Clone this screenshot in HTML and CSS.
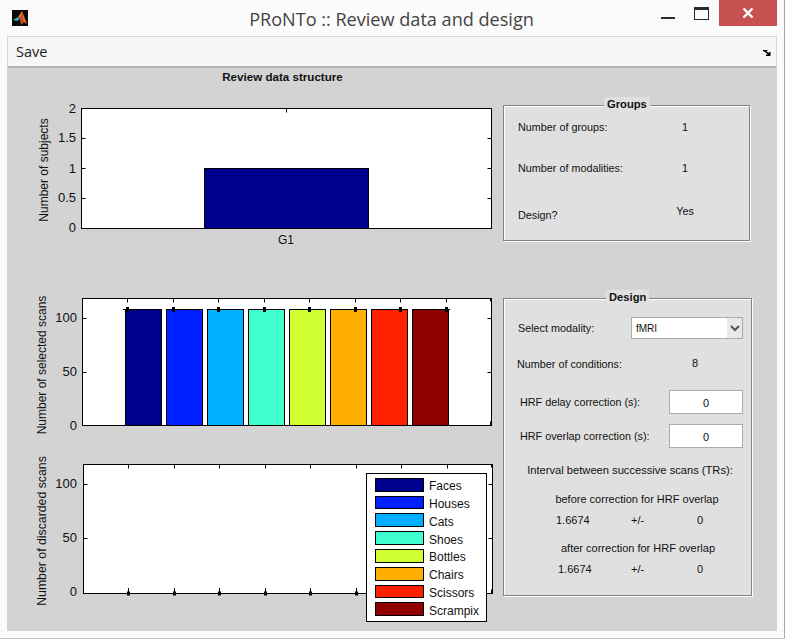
FILE: index.html
```html
<!DOCTYPE html>
<html lang="en">
<head>
  <meta charset="UTF-8">
  <meta name="viewport" content="width=device-width, initial-scale=1.0">
  <title>PRoNTo :: Review data and design</title>
  <link rel="stylesheet" href="styles.css">
</head>
<body>
  <div class="window">
    <div class="titlebar">
      <svg class="app-icon" width="16" height="16" viewBox="0 0 16 16">
        <rect width="16" height="16" fill="#0a0a0a"/>
        <path d="M1 10 L6 7 L8 9 L5 11 Z" fill="#3fa7c9"/>
        <path d="M6 7 L10 1 L15 14 L12 12 L9 9 Z" fill="#e8762a"/>
        <path d="M10 1 L12 12 L9 15 L8 9 Z" fill="#c9501c"/>
      </svg>
      <div class="title">PRoNTo :: Review data and design</div>
      <div class="window-buttons">
        <div class="btn-min"></div>
        <div class="btn-max"></div>
        <div class="btn-close">
          <svg width="12" height="10" viewBox="0 0 12 10">
            <path d="M1.5 0.5 L10.5 9.5 M10.5 0.5 L1.5 9.5" stroke="#fff" stroke-width="2.4" fill="none"/>
          </svg>
        </div>
      </div>
    </div>

    <div class="menubar">
      <span class="menu-item">Save</span>
      <svg class="dock-arrow" width="8" height="6" viewBox="0 0 8 6">
        <path d="M0 0 H4 L5 1 H3 L6 3 V2 H7.5 V6 H3 V4.5 H5 L2 2 L0 1 Z" fill="#000"/>
      </svg>
    </div>

    <div class="figure">
      <div class="plots">
        <div class="plots-title">Review data structure</div>

        <svg class="chart chart-subjects" width="496" height="164" viewBox="7 86 496 164">
          <rect class="axes" x="81.5" y="108.5" width="410" height="120"/>
          <rect x="204.5" y="168.5" width="164" height="60" fill="#00008f" stroke="#000"/>
          <path class="tick" d="M286.5 108.5 v4 M81.5 138.5 h4 M81.5 168.5 h4 M81.5 198.5 h4 M491.5 138.5 h-4 M491.5 168.5 h-4 M491.5 198.5 h-4"/>
          <text class="tick-label" x="76" y="113">2</text>
          <text class="tick-label" x="76" y="142">1.5</text>
          <text class="tick-label" x="76" y="173">1</text>
          <text class="tick-label" x="76" y="202">0.5</text>
          <text class="tick-label" x="76" y="232">0</text>
          <text class="x-label" x="286" y="244">G1</text>
          <text class="y-label" transform="translate(48 170) rotate(-90)">Number of subjects</text>
        </svg>

        <svg class="chart chart-selected" width="496" height="158" viewBox="7 288 496 158">
          <rect class="axes" x="82.5" y="298.5" width="409" height="127"/>
          <rect x="125.5" y="309.5" width="36" height="116" fill="#00008f" stroke="#000"/>
          <rect x="166.5" y="309.5" width="36" height="116" fill="#0020ff" stroke="#000"/>
          <rect x="207.5" y="309.5" width="36" height="116" fill="#00afff" stroke="#000"/>
          <rect x="248.5" y="309.5" width="36" height="116" fill="#40ffcf" stroke="#000"/>
          <rect x="289.5" y="309.5" width="36" height="116" fill="#cfff30" stroke="#000"/>
          <rect x="330.5" y="309.5" width="36" height="116" fill="#ffaf00" stroke="#000"/>
          <rect x="371.5" y="309.5" width="36" height="116" fill="#ff2000" stroke="#000"/>
          <rect x="412.5" y="309.5" width="36" height="116" fill="#8f0000" stroke="#000"/>
          <path class="tick" d="M127.5 298.5 v4 M173.5 298.5 v4 M218.5 298.5 v4 M264.5 298.5 v4 M309.5 298.5 v4 M355.5 298.5 v4 M400.5 298.5 v4 M446.5 298.5 v4
            M82.5 318.5 h4 M82.5 372.5 h4 M491.5 318.5 h-4 M491.5 372.5 h-4 M490.5 298.5 v3 M490.5 425.5 v-4"/>
          <path class="tick" d="M123 309.5 h8 M442 309.5 h8"/>
          <path class="dot" d="M127.5 307 v5 M173.5 307 v5 M218.5 307 v5 M264.5 307 v5 M309.5 307 v5 M355.5 307 v5 M400.5 307 v5 M446.5 307 v5"/>
          <text class="tick-label" x="77" y="322">100</text>
          <text class="tick-label" x="77" y="376">50</text>
          <text class="tick-label" x="77" y="430">0</text>
          <text class="y-label" transform="translate(46 365) rotate(-90)">Number of selected scans</text>
        </svg>

        <svg class="chart chart-discarded" width="496" height="185" viewBox="7 446 496 185">
          <rect class="axes" x="83.5" y="464.5" width="409" height="129"/>
          <path class="tick" d="M128.5 464.5 v4 M174.5 464.5 v4 M219.5 464.5 v4 M265.5 464.5 v4 M310.5 464.5 v4 M356.5 464.5 v4 M401.5 464.5 v4 M447.5 464.5 v4
            M83.5 484.5 h4 M83.5 538.5 h4 M492.5 484.5 h-4 M492.5 538.5 h-4 M491.5 464.5 v3 M491.5 593.5 v-4
            M128.5 588 v5 M174.5 588 v5 M219.5 588 v5 M265.5 588 v5 M310.5 588 v5 M356.5 588 v5"/>
          <path class="dot" d="M128.5 591.5 v4 M174.5 591.5 v4 M219.5 591.5 v4 M265.5 591.5 v4 M310.5 591.5 v4 M356.5 591.5 v4"/>
          <text class="tick-label" x="77" y="488">100</text>
          <text class="tick-label" x="77" y="542">50</text>
          <text class="tick-label" x="77" y="596">0</text>
          <text class="y-label y-label-long" transform="translate(46 531) rotate(-90)">Number of discarded scans</text>

          <rect x="366.5" y="473.5" width="120" height="148" fill="#fff" stroke="#000"/>
          <rect x="375.5" y="478.5" width="48" height="13" fill="#00008f" stroke="#000"/>
          <rect x="375.5" y="496.5" width="48" height="12" fill="#0020ff" stroke="#000"/>
          <rect x="375.5" y="513.5" width="48" height="13" fill="#00afff" stroke="#000"/>
          <rect x="375.5" y="531.5" width="48" height="13" fill="#40ffcf" stroke="#000"/>
          <rect x="375.5" y="549.5" width="48" height="13" fill="#cfff30" stroke="#000"/>
          <rect x="375.5" y="567.5" width="48" height="13" fill="#ffaf00" stroke="#000"/>
          <rect x="375.5" y="585.5" width="48" height="12" fill="#ff2000" stroke="#000"/>
          <rect x="375.5" y="602.5" width="48" height="13" fill="#8f0000" stroke="#000"/>
          <text class="legend-label" x="429" y="490">Faces</text>
          <text class="legend-label" x="429" y="508">Houses</text>
          <text class="legend-label" x="429" y="526">Cats</text>
          <text class="legend-label" x="429" y="544">Shoes</text>
          <text class="legend-label" x="429" y="561">Bottles</text>
          <text class="legend-label" x="429" y="579">Chairs</text>
          <text class="legend-label" x="429" y="597">Scissors</text>
          <text class="legend-label" x="429" y="615">Scrampix</text>
        </svg>
      </div>

      <div class="panels">
        <div class="panel panel-groups">
          <div class="panel-title">Groups</div>
          <div class="row row-groups"><span class="lbl">Number of groups:</span><span class="val">1</span></div>
          <div class="row row-modalities"><span class="lbl">Number of modalities:</span><span class="val">1</span></div>
          <div class="row row-design"><span class="lbl">Design?</span><span class="val val-yes">Yes</span></div>
        </div>

        <div class="panel panel-design">
          <div class="panel-title">Design</div>
          <div class="field field-modality">
            <span class="lbl">Select modality:</span>
            <div class="select">
              <span class="select-text">fMRI</span>
              <span class="select-btn">
                <svg width="10" height="7" viewBox="0 0 10 7"><path d="M1 1 L5 5 L9 1" stroke="#555" stroke-width="2" fill="none"/></svg>
              </span>
            </div>
          </div>
          <div class="field field-conditions">
            <span class="lbl">Number of conditions:</span>
            <span class="val-conditions">8</span>
          </div>
          <div class="field field-hrf">
            <span class="lbl">HRF delay correction (s):</span>
            <div class="num-box">0</div>
          </div>
          <div class="field field-hrf field-overlap">
            <span class="lbl">HRF overlap correction (s):</span>
            <div class="num-box">0</div>
          </div>
          <div class="center-line line-interval">Interval between successive scans (TRs):</div>
          <div class="center-line line-before">before correction for HRF overlap</div>
          <div class="stats stats-before"><span>1.6674</span><span>+/-</span><span>0</span></div>
          <div class="center-line line-after">after correction for HRF overlap</div>
          <div class="stats stats-after"><span>1.6674</span><span>+/-</span><span>0</span></div>
        </div>
      </div>
    </div>
  </div>
</body>
</html>
```

FILE: styles.css
```css
* {
  box-sizing: border-box;
}
html, body {
  margin: 0;
  padding: 0;
}
body {
  width: 785px;
  height: 641px;
  overflow: hidden;
  background: #fff;
  font-family: "Liberation Sans", Arial, sans-serif;
  color: #111;
}
.window {
  width: 785px;
  height: 639px;
  background: #fbfbfb;
  border-right: 1px solid #a8a8a8;
  border-bottom: 1px solid #c4c4c4;
}

/* title bar */
.titlebar {
  height: 36px;
  display: flex;
  padding-left: 12px;
}
.app-icon {
  margin-top: 10px;
}
.title {
  width: 633px;
  padding: 6px 0 0 94px;
  text-align: center;
  font-family: "Open Sans", sans-serif;
  font-size: 18.1px;
  line-height: 26px;
  color: #444;
  white-space: nowrap;
}
.window-buttons {
  display: flex;
}
.btn-min {
  width: 14px;
  height: 2px;
  margin-top: 17px;
  background: #2b2b2b;
}
.btn-max {
  width: 15px;
  height: 13px;
  margin: 7px 0 0 19px;
  border: 1px solid #2b2b2b;
  border-top-width: 3px;
}
.btn-close {
  width: 58px;
  height: 26px;
  margin-left: 10px;
  background: #c75050;
  display: flex;
  align-items: center;
  justify-content: center;
}

/* menu */
.menubar {
  width: 770px;
  height: 32px;
  margin-left: 7px;
  padding-left: 8px;
  display: flex;
  align-items: center;
  justify-content: space-between;
  background: #f5f6f8;
  border: 1px solid #d8d8d8;
  border-bottom: 2px solid #b4b4b4;
}
.menu-item {
  font-family: "Open Sans", sans-serif;
  font-size: 14.5px;
  color: #222;
}
.dock-arrow {
  margin-right: 5px;
  margin-top: 2px;
}

/* figure area */
.figure {
  width: 770px;
  height: 563px;
  margin-left: 7px;
  background: #d3d3d3;
  display: flex;
}
.plots {
  width: 496px;
}
.plots-title {
  height: 18px;
  width: 551px;
  text-align: center;
  font-size: 11.6px;
  font-weight: bold;
  line-height: 18px;
}
.chart {
  display: block;
}
.chart-selected {
  margin-top: 38px;
}
.axes {
  fill: #fff;
  stroke: #000;
}
.tick {
  fill: none;
  stroke: #000;
}
.dot {
  fill: none;
  stroke: #000;
  stroke-width: 3;
}
.tick-label {
  font-size: 13px;
  text-anchor: end;
  fill: #111;
}
.x-label {
  font-size: 12px;
  text-anchor: middle;
  fill: #111;
}
.y-label {
  font-size: 12px;
  text-anchor: middle;
  fill: #111;
}
.y-label-long {
  font-size: 12.3px;
}
.legend-label {
  font-size: 12px;
  fill: #111;
}

/* right side panels */
.panels {
  width: 249px;
}
.panel {
  position: relative;
  background: #e0e0e0;
  border: 1px solid #828282;
  box-shadow: inset 1px 1px 0 #fff, 1px 1px 0 #fff;
  font-size: 11px;
}
.panel-title {
  position: absolute;
  top: -9px;
  padding: 0 3px;
  background: #e0e0e0;
  font-size: 11.2px;
  font-weight: bold;
  line-height: 14px;
}
.panel-groups {
  width: 247px;
  height: 136px;
  margin-top: 37px;
  padding: 14px 0 0 14px;
  font-size: 10.8px;
}
.panel-groups .panel-title {
  left: 100px;
}
.row {
  display: flex;
  height: 14px;
  line-height: 14px;
}
.lbl {
  white-space: nowrap;
}
.field .lbl {
  font-size: 10.8px;
}
.row .lbl {
  width: 135px;
}
.val {
  width: 64px;
  text-align: center;
}
.row-modalities {
  margin-top: 27px;
}
.row-design {
  margin-top: 33px;
}
.val-yes {
  margin-top: -4px;
}
.panel-design {
  width: 249px;
  height: 298px;
  margin-top: 57px;
  padding: 18px 0 0 14px;
}
.panel-design .panel-title {
  left: 102px;
}
.field {
  display: flex;
  align-items: center;
  justify-content: space-between;
  padding-right: 8px;
}
.field-modality {
  height: 22px;
}
.select {
  width: 112px;
  height: 22px;
  display: flex;
  background: #fff;
  border: 1px solid #ababab;
}
.select-text {
  flex: 1;
  padding-left: 4px;
  font-size: 10px;
  line-height: 22px;
}
.select-btn {
  width: 15px;
  background: #e8e8e8;
  display: flex;
  align-items: center;
  justify-content: center;
}
.field-conditions {
  height: 14px;
  margin-top: 18px;
  margin-left: -1px;
  justify-content: flex-start;
}
.val-conditions {
  margin-left: 70px;
  margin-top: -2px;
}
.field-hrf {
  height: 24px;
  margin-top: 19px;
  margin-left: 2px;
}
.field-overlap {
  margin-top: 10px;
}
.num-box {
  width: 74px;
  height: 24px;
  background: #fff;
  border: 1px solid #ababab;
  text-align: center;
  line-height: 24px;
}
.center-line {
  height: 14px;
  line-height: 14px;
  text-align: center;
  white-space: nowrap;
}
.line-interval {
  width: 206px;
  margin: 15px 0 0 9px;
  font-size: 11.15px;
}
.line-before {
  width: 164px;
  margin: 15px 0 0 37px;
}
.line-after {
  width: 154px;
  margin: 14px 0 0 43px;
}
.stats {
  display: grid;
  grid-template-columns: 75px 66px 12px;
  height: 14px;
  line-height: 14px;
  margin-top: 7px;
  margin-left: 38px;
}
.stats-after {
  margin-left: 40px;
  grid-template-columns: 73px 66px 12px;
}
```
